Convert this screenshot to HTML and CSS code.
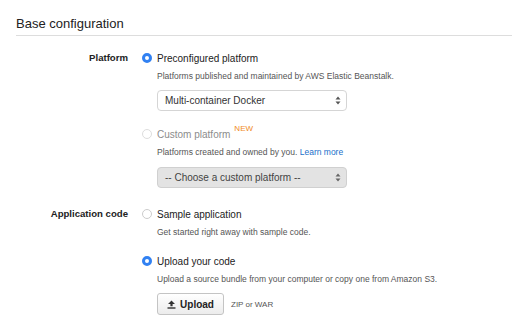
FILE: index.html
```html
<!DOCTYPE html>
<html lang="en">
  <head>
    <meta charset="UTF-8" />
    <meta name="viewport" content="width=device-width, initial-scale=1.0" />
    <title>Base configuration</title>
    <link rel="stylesheet" href="styles.css">
  </head>
  <body>
    <div class="panel">
      <!-- 标题 -->
      <h2 class="panel-title">Base configuration</h2>

      <!-- Platform -->
      <div class="field">
        <div class="field-label">Platform</div>
        <div class="field-body">
          <div class="choice">
            <div class="radio-row"><span class="radio checked"></span>Preconfigured platform</div>
            <div class="choice-body">
              <p class="help">Platforms published and maintained by AWS Elastic Beanstalk.</p>
              <div class="select">
                <span>Multi-container Docker</span>
                <svg class="arrows" width="6" height="9" viewBox="0 0 6 9"><path d="M3 0.5 L5.5 3.5 H0.5 Z M3 8.5 L5.5 5.5 H0.5 Z" fill="#555"/></svg>
              </div>
            </div>
          </div>
          <div class="choice disabled">
            <div class="radio-row"><span class="radio"></span>Custom platform <sup class="badge">NEW</sup></div>
            <div class="choice-body">
              <p class="help">Platforms created and owned by you. <a href="javascript:;">Learn more</a></p>
              <div class="select">
                <span>-- Choose a custom platform --</span>
                <svg class="arrows" width="6" height="9" viewBox="0 0 6 9"><path d="M3 0.5 L5.5 3.5 H0.5 Z M3 8.5 L5.5 5.5 H0.5 Z" fill="#666"/></svg>
              </div>
            </div>
          </div>
        </div>
      </div>

      <!-- Application code -->
      <div class="field">
        <div class="field-label">Application code</div>
        <div class="field-body">
          <div class="choice">
            <div class="radio-row"><span class="radio"></span>Sample application</div>
            <div class="choice-body">
              <p class="help">Get started right away with sample code.</p>
            </div>
          </div>
          <div class="choice">
            <div class="radio-row"><span class="radio checked"></span>Upload your code</div>
            <div class="choice-body">
              <p class="help">Upload a source bundle from your computer or copy one from Amazon S3.</p>
              <div class="upload-row">
                <a href="javascript:;" class="btn">
                  <svg width="9" height="9" viewBox="0 0 9 9"><path d="M4.5 0.5 L8 4 H5.6 V6.2 H3.4 V4 H1 Z" fill="#333"/><rect x="0.5" y="7.3" width="8" height="1.4" fill="#333"/></svg>
                  Upload
                </a>
                <span class="hint">ZIP or WAR</span>
              </div>
            </div>
          </div>
        </div>
      </div>
    </div>
  </body>
</html>
```

FILE: styles.css
```css
* {
  margin: 0;
  padding: 0;
  box-sizing: border-box;
}
body {
  background: #fff;
  color: #222;
  font-family: "Liberation Sans", Arial, sans-serif;
}
a {
  text-decoration: none;
}

.panel-title {
  margin-left: 16px;
  padding: 16px 0 3px;
  border-bottom: 1px solid #ddd;
  font-size: 13px;
  font-weight: normal;
  line-height: 16px;
  color: #222;
}

.field {
  display: grid;
  grid-template-columns: 112px 1fr;
  column-gap: 14px;
  padding-left: 16px;
  margin-top: 14px;
}
.field + .field {
  margin-top: 18px;
}
.field-label {
  text-align: right;
  font-size: 9.6px;
  font-weight: bold;
  line-height: 16px;
}

.choice + .choice {
  margin-top: 15px;
}
.choice-body {
  padding-left: 15px;
}
.radio-row {
  display: flex;
  align-items: center;
  height: 16px;
  font-size: 10px;
}
.radio {
  width: 10px;
  height: 10px;
  margin-right: 5px;
  border: 1px solid #ccc;
  border-radius: 50%;
  background: #fff;
}
.radio.checked {
  border: 3.5px solid #3181f2;
  background: #fff;
}
.badge {
  align-self: flex-start;
  margin-left: 4px;
  margin-top: -2px;
  font-size: 8px;
  line-height: 9px;
  color: #f08a1c;
}
.help {
  margin-top: 4px;
  font-size: 8.5px;
  line-height: 12px;
  color: #555;
}
.help a {
  color: #1a6fc9;
}

.select {
  display: flex;
  align-items: center;
  justify-content: space-between;
  width: 190px;
  height: 21px;
  margin-top: 8px;
  padding: 0 5px 0 7px;
  border: 1px solid #d5d5d5;
  border-radius: 4px;
  background: #fff;
  font-size: 10px;
  color: #333;
}
.disabled .radio-row {
  color: #8c8c8c;
}
.disabled .radio {
  border-color: #ddd;
}
.disabled .select {
  margin-top: 9px;
  background: #e3e3e3;
  border-color: #d0d0d0;
  color: #444;
}

.upload-row {
  display: flex;
  align-items: center;
  margin-top: 8px;
}
.btn {
  display: flex;
  align-items: center;
  justify-content: center;
  gap: 4px;
  width: 67px;
  height: 22px;
  border: 1px solid #c4c4c4;
  border-radius: 3px;
  background: linear-gradient(#fff, #ececec);
  color: #222;
  font-size: 10px;
  font-weight: bold;
}
.hint {
  margin-left: 7px;
  font-size: 8px;
  color: #555;
}
```
